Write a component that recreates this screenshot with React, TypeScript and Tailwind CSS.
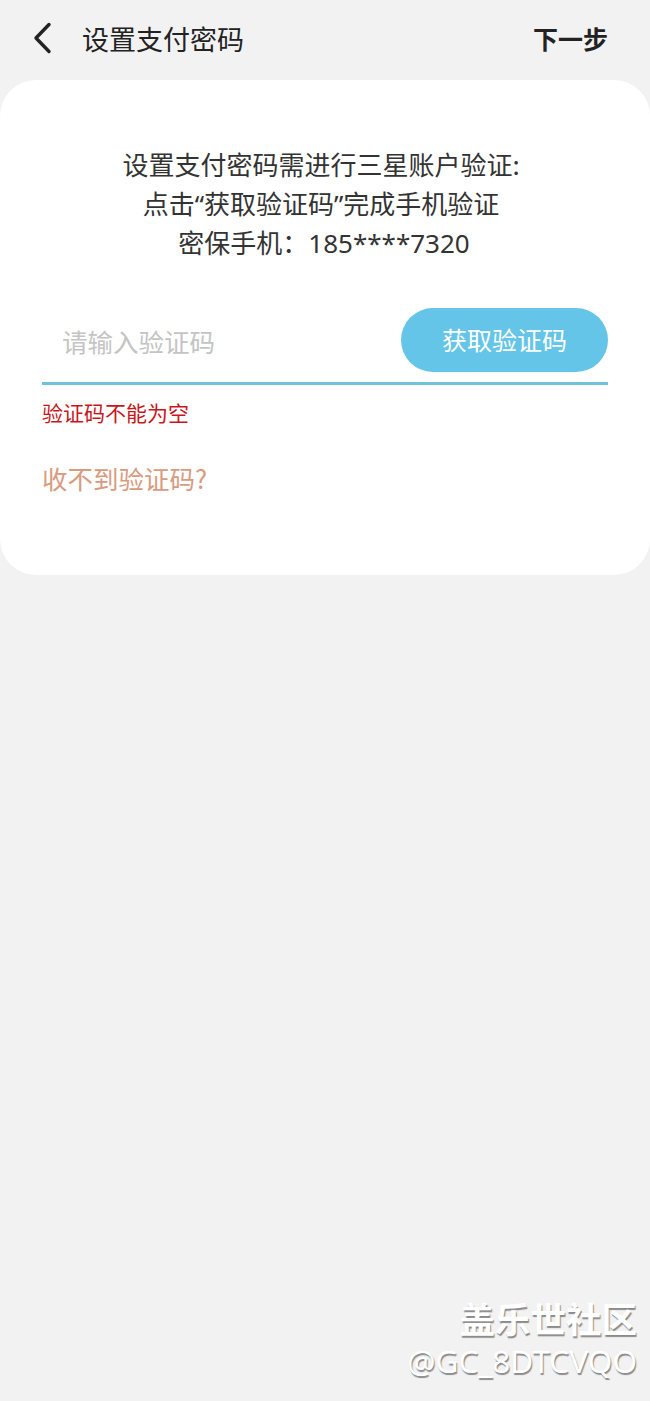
import React from "react";

export default function App() {
  const font = { fontFamily: '"Noto Sans CJK SC", "Noto Sans", sans-serif' };
  const latin = { fontFamily: '"Noto Sans", "Noto Sans CJK SC", sans-serif' };
  return (
    <div className="relative min-h-[1401px] w-[650px] bg-[#f2f2f2] overflow-hidden" style={font}>
      <div className="flex h-[80px] items-center pb-[4px] pl-[31px] pr-[42px]">
        <svg width="22" height="32" viewBox="0 0 22 32" className="mr-[29px]">
          <path d="M18 2.5 L5 16 L18 29.5" fill="none" stroke="#222" strokeWidth="3.4" strokeLinecap="round" strokeLinejoin="round" />
        </svg>
        <div className="text-[27px] leading-none text-[#222]">设置支付密码</div>
        <div className="ml-auto text-[25px] font-bold leading-none text-[#222]">下一步</div>
      </div>
      <div className="h-[495px] rounded-[36px] bg-white px-[42px] pt-[64px]">
        <div className="pr-[8px] text-center text-[26px] leading-[39px] text-[#333]">
          <div className="h-[39px]">设置支付密码需进行三星账户验证:</div>
          <div className="h-[39px]">
            点击<span style={latin} className="leading-none">“</span>获取验证码<span style={latin} className="leading-none">”</span>完成手机验证
          </div>
          <div className="h-[39px] pl-[6px]">
            密保手机：<span style={latin} className="leading-none">185****7320</span>
          </div>
        </div>
        <div className="mt-[47px] flex h-[77px] items-start border-b-[3px] border-[#6ec3dc]">
          <div className="flex h-[66px] flex-1 items-center pl-[20px] text-[25.5px] text-[#c4c4c4]">请输入验证码</div>
          <div className="flex h-[64px] w-[207px] items-center justify-center rounded-full bg-[#65c5e9] text-[25px] text-white">获取验证码</div>
        </div>
        <div className="mt-[14px] text-[21px] leading-[26px] text-[#c8161d]">验证码不能为空</div>
        <div className="mt-[38px] text-[25.5px] leading-[30px] text-[#d99a7e]">收不到验证码?</div>
      </div>
      <div className="absolute right-[13px] top-[1295px] flex flex-col items-end text-white" style={{ textShadow: "1px 2px 1px #8a8a8a" }}>
        <div className="text-[35.5px] font-bold leading-[45px]">盖乐世社区</div>
        <div className="text-[31.5px] leading-[42px]" style={latin}>@GC_8DTCVQO</div>
      </div>
    </div>
  );
}
